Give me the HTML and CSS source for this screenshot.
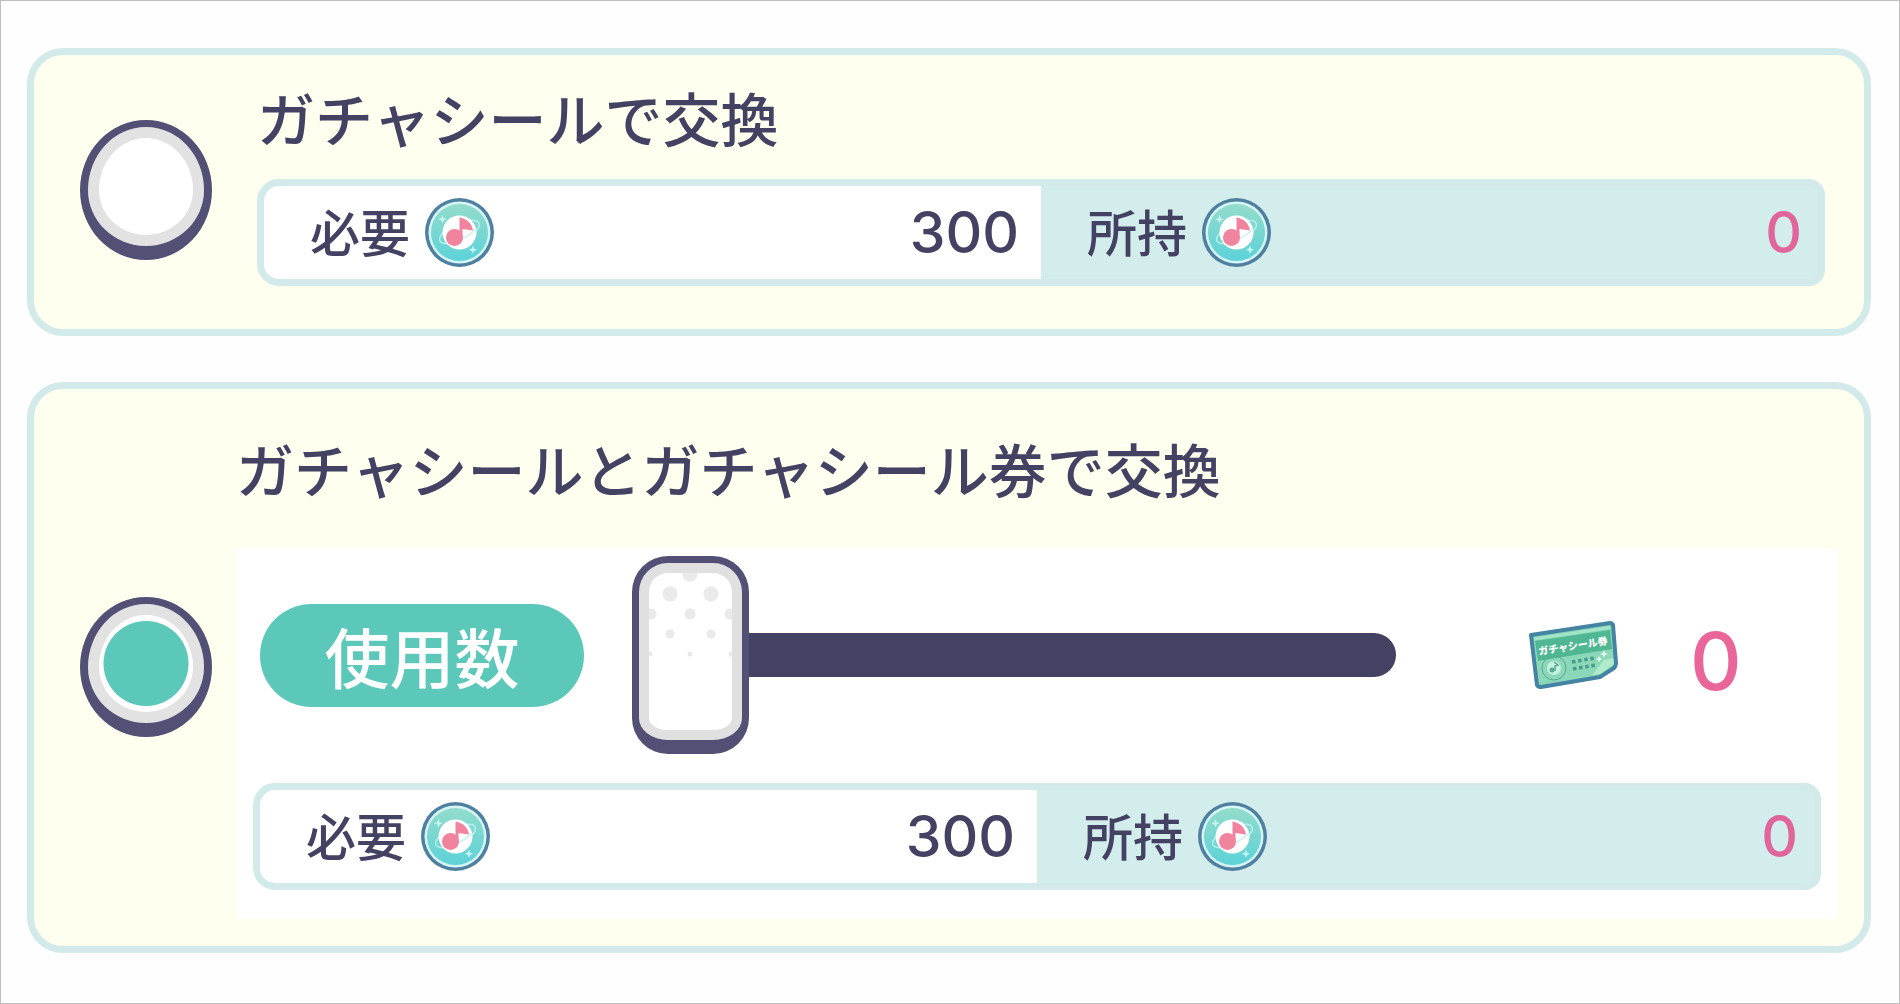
FILE: index.html
```html
<!DOCTYPE html>
<html lang="ja">
<head>
    <meta charset="UTF-8">
    <meta name="viewport" content="width=device-width, initial-scale=1.0">
    <title>ガチャシール交換</title>
    <link rel="stylesheet" href="styles.css">
</head>
<body>
    <svg class="symbols" aria-hidden="true">
        <defs>
            <linearGradient id="coinFill" x1="0" y1="0" x2="0" y2="1">
                <stop offset="0" stop-color="#93dccb"/>
                <stop offset="1" stop-color="#5cd2d8"/>
            </linearGradient>
        </defs>
        <symbol id="coin" viewBox="0 0 69 69">
            <circle cx="34.5" cy="34.5" r="34.500" fill="#4f809f"/>
            <circle cx="34.5" cy="34.5" r="31" fill="#d5f4f6"/>
            <circle cx="34.5" cy="34.5" r="28.5" fill="url(#coinFill)"/>
            <ellipse cx="34.5" cy="34" rx="21.5" ry="8.5" transform="rotate(-24 34.5 34)" fill="none" stroke="#b5eeee" stroke-width="1.6"/>
            <circle cx="34.5" cy="34.5" r="17" fill="#fff"/>
            <path d="M35 42Q44 38 51 31" fill="none" stroke="#c9f0f0" stroke-width="1.4"/>
            <path d="M34.500 19.500C41 20.500 47 25 48 32.500L37.500 31V40H34.500Z" fill="#f0839d"/>
            <circle cx="29.500" cy="39.500" r="8.500" fill="#f0839d"/>
            <path d="M17.500 17l1.200 3 3 1.200-3 1.200-1.200 3-1.200-3-3-1.200 3-1.200zM48 47.500l1.200 3 3 1.200-3 1.200-1.200 3-1.200-3-3-1.200 3-1.200z" fill="#c5f5f2"/>
        </symbol>
    </svg>

    <div class="card">
        <input type="radio" name="exchange" id="exchangeSeal" class="radio">
        <div class="card-body">
            <label for="exchangeSeal" class="card-title">ガチャシールで交換</label>
            <div class="cost">
                <div class="cost-cell need">
                    <span class="cost-label">必要</span>
                    <svg class="coin"><use href="#coin"/></svg>
                    <span class="cost-value">300</span>
                </div>
                <div class="cost-cell own">
                    <span class="cost-label">所持</span>
                    <svg class="coin"><use href="#coin"/></svg>
                    <span class="cost-value lack">0</span>
                </div>
            </div>
        </div>
    </div>

    <div class="card card-ticket">
        <input type="radio" name="exchange" id="exchangeTicket" class="radio" checked>
        <div class="card-body">
            <label for="exchangeTicket" class="card-title">ガチャシールとガチャシール券で交換</label>
            <div class="panel">
                <div class="use-row">
                    <label for="useCount" class="pill">使用数</label>
                    <input type="range" id="useCount" class="slider" min="0" max="10" value="0">
                    <svg class="ticket" viewBox="0 0 89 68" aria-hidden="true">
                        <path d="M2 14L81 2Q83 2 84 4L87 42Q87 45 85 47L71 56L12 66Q9 66 8 64Z" fill="#8bd8b8" stroke="#4583a3" stroke-width="4" stroke-linejoin="round"/>
                        <path d="M6 20L81 9L83 28L9 40Z" fill="#4fb792"/>
                        <path d="M5.500 18L81 6.500" fill="none" stroke="#a3e6c8" stroke-width="2.500"/>
                        <text x="10" y="34" transform="rotate(-9 10 34)" class="ticket-text">ガチャシール券</text>
                        <circle cx="25" cy="47" r="12" fill="none" stroke="#58a893" stroke-width="1"/>
                        <circle cx="25" cy="47" r="7" fill="#c6f0df"/>
                        <path d="M25 41l4 3-3 1v5" fill="none" stroke="#58a893" stroke-width="1.500"/>
                        <circle cx="23" cy="49" r="2.500" fill="#58a893"/>
                        <path d="M43 41L66 37M44 48L67 44" fill="none" stroke="#4a9a8c" stroke-width="3.500" stroke-dasharray="3.500 2.700"/>
                        <path d="M70 45l5-6 9-2 1 6-14 10-8 1z" fill="#aeeacb"/>
                        <path d="M75 29l1 3 3 1-3 1-1 3-1-3-3-1 3-1zM70 35l1 2 2 1-2 1-1 2-1-2-2-1 2-1z" fill="#eafff5"/>
                    </svg>
                    <output for="useCount" id="useValue" class="use-value">0</output>
                </div>
                <div class="cost">
                    <div class="cost-cell need">
                        <span class="cost-label">必要</span>
                        <svg class="coin"><use href="#coin"/></svg>
                        <span class="cost-value">300</span>
                    </div>
                    <div class="cost-cell own">
                        <span class="cost-label">所持</span>
                        <svg class="coin"><use href="#coin"/></svg>
                        <span class="cost-value lack">0</span>
                    </div>
                </div>
            </div>
        </div>
    </div>

    <script>
        document.getElementById('useCount').addEventListener('input', function () {
            document.getElementById('useValue').textContent = this.value;
        });
    </script>
</body>
</html>
```
FILE: styles.css
```css
* {
    box-sizing: border-box;
}
body {
    margin: 0;
    min-height: 100vh;
    padding: 47px 28px 48px 26px;
    border: 1px solid #c0c0c0;
    display: flex;
    flex-direction: column;
    gap: 46px;
    background: #fefefe;
    color: #444262;
    font-family: "Noto Sans CJK JP", sans-serif;
    font-weight: 500;
}
.symbols {
    position: absolute;
    width: 0;
    height: 0;
}
.card {
    display: flex;
    align-items: center;
    gap: 45px;
    padding: 38px 39px 43px 46px;
    border: 7px solid #d3eaea;
    border-radius: 36px;
    background: #ffffef;
}
.card-ticket {
    gap: 24px;
    padding: 26px 26px 27px 46px;
}
.card-body {
    flex: 1;
    min-width: 0;
}
.card-title {
    display: block;
    margin-bottom: 38px;
    font-size: 58px;
    line-height: 48px;
}
.card-ticket .card-title {
    margin: 29px 0 56px;
}

/* ラジオボタン */
.radio {
    appearance: none;
    flex: none;
    width: 132px;
    height: 140px;
    margin: 0;
    border: 8px solid #525074;
    border-top-width: 7px;
    border-bottom-width: 14px;
    border-radius: 50%;
    background: #fff;
    box-shadow: inset 0 0 0 11px #e2e2e3;
    cursor: pointer;
}
.radio:checked {
    background: radial-gradient(circle, #5bc8ba 42px, #fff 43px);
}

/* 必要 / 所持 */
.cost {
    display: grid;
    grid-template-columns: 1fr 1fr;
    border: 7px solid #d3eaea;
    border-radius: 22px 16px 16px 22px;
    background: #d3ecec;
}
.cost-cell {
    display: flex;
    align-items: center;
    height: 93px;
    padding-left: 46px;
}
.need {
    padding-right: 22px;
    border-radius: 15px 0 0 15px;
    background: #fff;
}
.own {
    padding-right: 16px;
}
.cost-label {
    padding-bottom: 5px;
    font-size: 50px;
    line-height: 60px;
}
.coin {
    width: 69px;
    height: 69px;
    margin-left: 15px;
}
.cost-value {
    margin-left: auto;
    font-family: Inter, sans-serif;
    font-size: 57px;
    font-weight: 500;
    line-height: 60px;
}
.lack {
    color: #e0659a;
}

/* 使用数 */
.panel {
    padding: 8px 17px 29px;
    background: #fff;
}
.use-row {
    display: flex;
    align-items: center;
    margin-bottom: 29px;
    padding-left: 7px;
}
.pill {
    flex: none;
    width: 324px;
    border-radius: 52px;
    background: #5bc8ba;
    color: #fff;
    font-size: 65px;
    line-height: 103px;
    text-align: center;
}
.slider {
    appearance: none;
    flex: 1;
    min-width: 0;
    height: 198px;
    margin: 0 0 0 48px;
    background: none;
    cursor: pointer;
}
.slider::-webkit-slider-runnable-track {
    height: 44px;
    border-radius: 22px;
    background: #444262;
}
.slider::-webkit-slider-thumb {
    appearance: none;
    width: 117px;
    height: 198px;
    margin-top: -77px;
    border: 7px solid #525074;
    border-bottom-width: 14px;
    border-radius: 36px;
    background:
        radial-gradient(circle at 51px 11px, #eaeaea 7px, transparent 8px),
        radial-gradient(circle at 31px 31px, #eaeaea 7px, transparent 8px),
        radial-gradient(circle at 72px 31px, #eaeaea 7px, transparent 8px),
        radial-gradient(circle at 12px 51px, #eaeaea 5px, transparent 6px),
        radial-gradient(circle at 51px 51px, #eaeaea 5px, transparent 6px),
        radial-gradient(circle at 91px 51px, #eaeaea 5px, transparent 6px),
        radial-gradient(circle at 31px 71px, #eaeaea 4px, transparent 5px),
        radial-gradient(circle at 72px 71px, #eaeaea 4px, transparent 5px),
        radial-gradient(circle at 11px 91px, #eaeaea 2px, transparent 3px),
        radial-gradient(circle at 51px 91px, #eaeaea 2px, transparent 3px),
        radial-gradient(circle at 92px 91px, #eaeaea 2px, transparent 3px),
        #fff;
    box-shadow: inset 0 0 0 10px #e0e0e0;
}
.ticket {
    flex: none;
    width: 89px;
    height: 68px;
    margin-left: 133px;
}
.ticket-text {
    fill: #fff;
    font-size: 10px;
    font-weight: 900;
}
.use-value {
    width: 203px;
    padding: 12px 0 0 72px;
    color: #e9659a;
    font-family: Inter, sans-serif;
    font-size: 80px;
    font-weight: 500;
    line-height: 100px;
}
```
